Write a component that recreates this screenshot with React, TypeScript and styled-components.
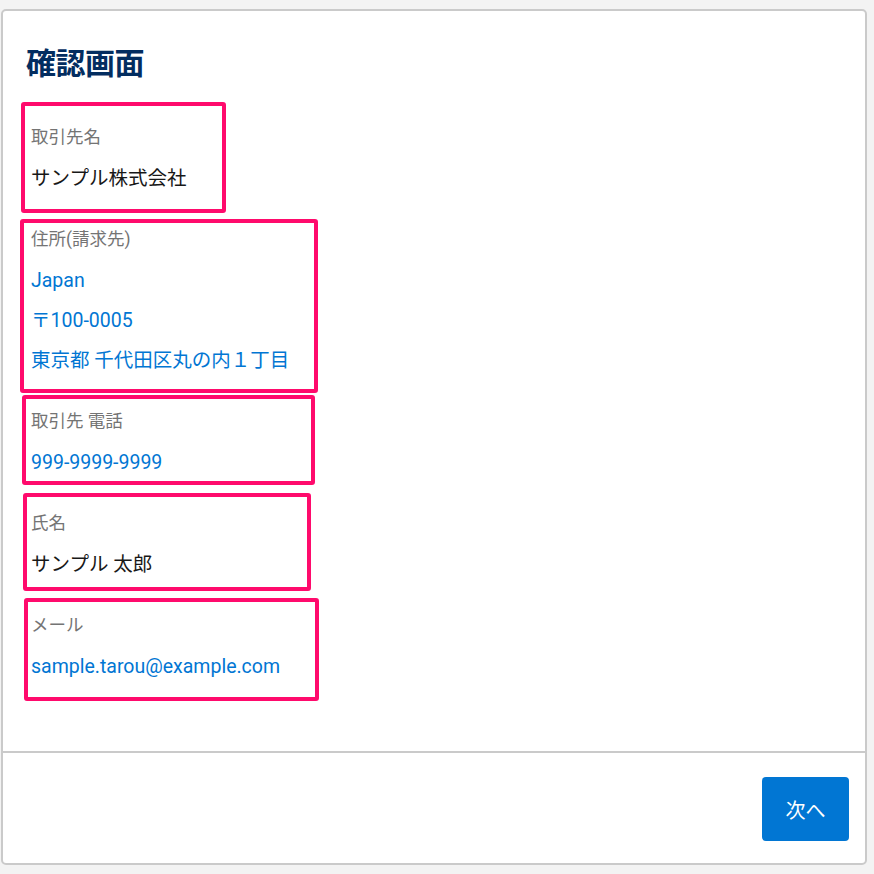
import styled, { createGlobalStyle } from "styled-components";

const GlobalStyle = createGlobalStyle`
    html, body {
        margin: 0;
        padding: 0;
        background-color: #f3f3f3;
    }
    body {
        font-family: Roboto, "Noto Sans CJK JP", sans-serif;
    }
`;

const Card = styled.div`
    box-sizing: border-box;
    margin: 9px 7px 9px 1px;
    height: 856px;
    background-color: #ffffff;
    border: 2px solid #cacaca;
    border-radius: 5px;
    display: flex;
    flex-direction: column;
`;

const Body = styled.div`
    flex: 1;
    padding: 32px 0 0 28px;
`;

const Title = styled.h1`
    margin: 0 0 34px -5px;
    height: 40px;
    line-height: 42px;
    font-size: 30px;
    font-weight: 700;
    color: #032d60;
    letter-spacing: -0.5px;
`;

const FieldList = styled.div`
    display: flex;
    flex-direction: column;
    gap: 22px;
`;

// pink annotation frame drawn over each field
type Frame = { top: number; left: number; width: number; height: number };

const Field = styled.div<{ $frame: Frame }>`
    position: relative;
    &::after {
        content: "";
        position: absolute;
        box-sizing: border-box;
        top: ${(p) => p.$frame.top}px;
        left: ${(p) => p.$frame.left}px;
        width: ${(p) => p.$frame.width}px;
        height: ${(p) => p.$frame.height}px;
        border: 4px solid #ff0a6c;
        border-radius: 3px;
        pointer-events: none;
    }
`;

const Label = styled.div`
    height: 40px;
    line-height: 40px;
    font-size: 17.5px;
    color: #747474;
`;

const Value = styled.div<{ $link?: boolean }>`
    height: 40px;
    line-height: 44px;
    font-size: 19.5px;
    color: ${(p) => (p.$link ? "#0176d3" : "#181818")};
`;

const Footer = styled.div`
    height: 112px;
    border-top: 2px solid #cacaca;
    display: flex;
    justify-content: flex-end;
    align-items: flex-start;
    padding: 24px 16px 0 0;
    box-sizing: border-box;
`;

const NextButton = styled.button`
    width: 87px;
    height: 64px;
    border: none;
    border-radius: 4px;
    background-color: #0176d3;
    color: #ffffff;
    font-family: Roboto, "Noto Sans CJK JP", sans-serif;
    font-size: 20px;
    cursor: pointer;
`;

const fields: { label: string; values: string[]; link?: boolean; frame: Frame }[] = [
    { label: "取引先名", values: ["サンプル株式会社"], frame: { top: -15, left: -10, width: 205, height: 111 } },
    {
        label: "住所(請求先)",
        values: ["Japan", "〒100-0005", "東京都 千代田区丸の内１丁目"],
        link: true,
        frame: { top: 0, left: -11, width: 298, height: 174 },
    },
    { label: "取引先 電話", values: ["999-9999-9999"], link: true, frame: { top: -6, left: -9, width: 293, height: 90 } },
    { label: "氏名", values: ["サンプル 太郎"], frame: { top: -10, left: -8, width: 288, height: 98 } },
    { label: "メール", values: ["sample.tarou@example.com"], link: true, frame: { top: -7, left: -7, width: 295, height: 103 } },
];

export default function App() {
    return (
        <>
            <GlobalStyle />
            <Card>
                <Body>
                    <Title>確認画面</Title>
                    <FieldList>
                        {fields.map((f) => (
                            <Field key={f.label} $frame={f.frame}>
                                <Label>{f.label}</Label>
                                {f.values.map((v) => (
                                    <Value key={v} $link={f.link}>{v}</Value>
                                ))}
                            </Field>
                        ))}
                    </FieldList>
                </Body>
                <Footer>
                    <NextButton>次へ</NextButton>
                </Footer>
            </Card>
        </>
    );
}
